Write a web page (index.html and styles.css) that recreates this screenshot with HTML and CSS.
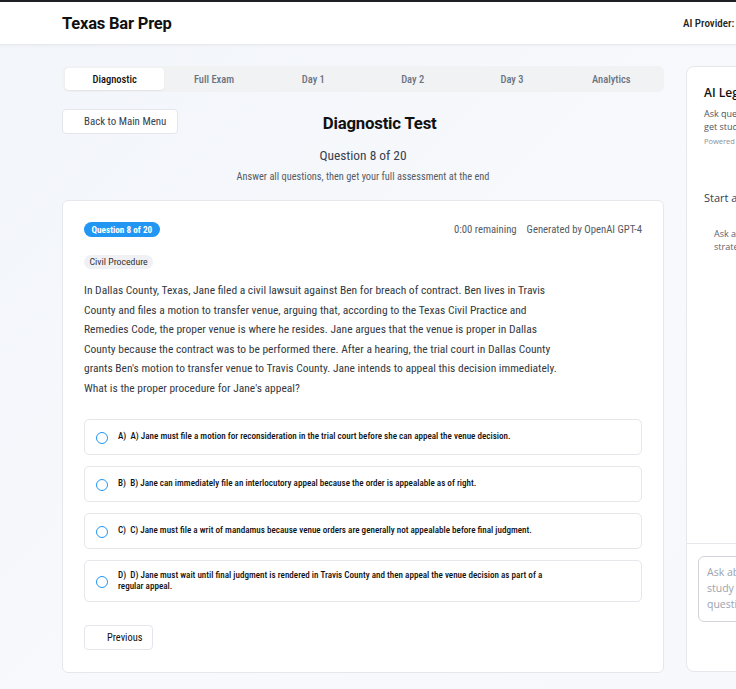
FILE: index.html
```html
<!DOCTYPE html>
<html lang="en">
<head>
<meta charset="utf-8">
<title>Texas Bar Prep</title>
<link rel="stylesheet" href="styles.css">
</head>
<body>
<header class="topbar">
  <div class="topbar-inner">
    <div class="brand">Texas Bar Prep</div>
    <div class="provider"><span class="provider-label">AI Provider:</span><span class="provider-select">OpenAI GPT-4</span></div>
  </div>
</header>

<div class="layout">
  <main class="main-col">
    <nav class="tabs">
      <button class="tab active">Diagnostic</button>
      <button class="tab">Full Exam</button>
      <button class="tab">Day 1</button>
      <button class="tab">Day 2</button>
      <button class="tab">Day 3</button>
      <button class="tab">Analytics</button>
    </nav>

    <div class="toolbar">
      <button class="btn back">Back to Main Menu</button>
      <h1 class="title">Diagnostic Test</h1>
    </div>
    <p class="progress">Question 8 of 20</p>
    <p class="hint">Answer all questions, then get your full assessment at the end</p>

    <section class="card">
      <div class="card-head">
        <span class="badge">Question 8 of 20</span>
        <div class="meta"><span>0:00 remaining</span><span>Generated by OpenAI GPT-4</span></div>
      </div>
      <span class="tag">Civil Procedure</span>
      <p class="stem">In Dallas County, Texas, Jane filed a civil lawsuit against Ben for breach of contract. Ben lives in Travis County and files a motion to transfer venue, arguing that, according to the Texas Civil Practice and Remedies Code, the proper venue is where he resides. Jane argues that the venue is proper in Dallas County because the contract was to be performed there. After a hearing, the trial court in Dallas County grants Ben's motion to transfer venue to Travis County. Jane intends to appeal this decision immediately. What is the proper procedure for Jane's appeal?</p>

      <div class="options">
        <label class="option"><span class="radio"></span><span class="option-text">A)&nbsp; A) Jane must file a motion for reconsideration in the trial court before she can appeal the venue decision.</span></label>
        <label class="option"><span class="radio"></span><span class="option-text">B)&nbsp; B) Jane can immediately file an interlocutory appeal because the order is appealable as of right.</span></label>
        <label class="option"><span class="radio"></span><span class="option-text">C)&nbsp; C) Jane must file a writ of mandamus because venue orders are generally not appealable before final judgment.</span></label>
        <label class="option"><span class="radio"></span><span class="option-text">D)&nbsp; D) Jane must wait until final judgment is rendered in Travis County and then appeal the venue decision as part of a regular appeal.</span></label>
      </div>

      <button class="btn prev">Previous</button>
    </section>
  </main>

  <aside class="chat">
    <div class="chat-head">
      <h2 class="chat-title">AI Legal Assistant</h2>
      <p class="chat-desc">Ask questions about Texas law and<br>get study help for the bar exam</p>
      <p class="chat-powered">Powered by OpenAI GPT-4</p>
    </div>
    <div class="chat-body">
      <p class="chat-empty">Start a conversation</p>
      <p class="chat-tip">Ask about legal concepts, exam<br>strategies, or specific questions</p>
    </div>
    <div class="chat-input">
      <textarea class="chat-box" placeholder="Ask about Texas law,&#10;study strategies, or&#10;questions..."></textarea>
    </div>
  </aside>
</div>
</body>
</html>
```
FILE: styles.css
```css
* { box-sizing: border-box; }

html, body {
  margin: 0;
  overflow: hidden;
}

body {
  width: 1010px;
  min-height: 689px;
  font-family: "Roboto Condensed", "Roboto", sans-serif;
  color: #1f2937;
  background: linear-gradient(135deg, #f2f5fa 0%, #f7f9fc 55%, #f6f8fc 100%);
}

/* ---------- top bar ---------- */
.topbar {
  height: 45px;
  background: #fff;
  border-top: 2px solid #1e1f22;
  border-bottom: 1px solid #e6e9ee;
  box-shadow: 0 1px 3px rgba(15, 23, 42, 0.04);
}

.topbar-inner {
  display: grid;
  grid-template-columns: 602px 300px;
  column-gap: 22px;
  align-items: center;
  height: 100%;
  padding: 0 62px;
}

.brand {
  font-family: "Roboto", sans-serif;
  font-weight: 700;
  font-size: 16.5px;
  letter-spacing: -0.2px;
  color: #111;
}

.provider {
  margin-left: -3px;
  white-space: nowrap;
  font-size: 11px;
  font-weight: 500;
  color: #222;
}

.provider-select {
  margin-left: 8px;
  padding: 3px 8px;
  border: 1px solid #d1d5db;
  border-radius: 4px;
}

/* ---------- layout ---------- */
.layout {
  display: grid;
  grid-template-columns: 602px 300px;
  column-gap: 22px;
  align-items: start;
  padding: 21px 62px 22px;
}

/* ---------- tabs ---------- */
.tabs {
  display: grid;
  grid-template-columns: repeat(6, 1fr);
  height: 26px;
  padding: 2px 3px;
  background: #f1f2f4;
  border-radius: 6px;
}

.tab {
  border: 0;
  background: transparent;
  border-radius: 4px;
  font-family: inherit;
  font-size: 10.5px;
  font-weight: 500;
  color: #6b7280;
  padding: 0;
}

.tab.active {
  background: #fff;
  color: #111;
  box-shadow: 0 1px 2px rgba(0, 0, 0, 0.06);
}

/* ---------- toolbar ---------- */
.toolbar {
  display: flex;
  align-items: center;
  height: 25px;
  margin-top: 17px;
}

.btn {
  height: 25px;
  background: #fff;
  border: 1px solid #e3e6ea;
  border-radius: 4px;
  font-family: inherit;
  font-size: 10.9px;
  color: #374151;
}

.back {
  padding: 0 11px 0 21px;
}

.title {
  flex: 1;
  margin: 3px 0 0;
  padding-right: 83px;
  text-align: center;
  font-family: "Roboto", sans-serif;
  font-size: 16.75px;
  letter-spacing: -0.2px;
  font-weight: 700;
  color: #111;
}

.progress {
  margin: 14px 0 0;
  text-align: center;
  font-size: 13.4px;
  line-height: 16px;
  color: #374151;
}

.hint {
  margin: 7px 0 0;
  text-align: center;
  font-size: 10.35px;
  line-height: 12px;
  color: #555b65;
}

/* ---------- question card ---------- */
.card {
  margin-top: 17px;
  padding: 21px 21px 22px;
  background: #fff;
  border: 1px solid #e5e7eb;
  border-radius: 6px;
}

.card-head {
  display: flex;
  justify-content: space-between;
  align-items: center;
  height: 15px;
}

.badge {
  height: 15px;
  line-height: 15px;
  padding: 0 7.5px;
  border-radius: 8px;
  background: #2196f3;
  color: #fff;
  font-size: 9.2px;
  font-weight: 700;
}

.meta {
  display: flex;
  gap: 10px;
  font-size: 10.7px;
  color: #555b65;
}

.tag {
  display: inline-block;
  margin-top: 18px;
  height: 14px;
  line-height: 14px;
  padding: 0 5.5px;
  border-radius: 7px;
  background: #f0f1f4;
  font-size: 9.8px;
  color: #333;
}

.stem {
  max-width: 486px;
  margin: 12px 0 0;
  font-size: 11.5px;
  line-height: 19.5px;
  color: #333943;
}

.options {
  display: flex;
  flex-direction: column;
  gap: 11px;
  margin-top: 21px;
}

.option {
  display: flex;
  align-items: center;
  gap: 10px;
  min-height: 36px;
  padding: 9.5px 11px;
  border: 1px solid #e5e7eb;
  border-radius: 5px;
  background: #fff;
}

.radio {
  flex: none;
  width: 12px;
  height: 12px;
  margin-top: 2px;
  border: 1.5px solid #2196f3;
  border-radius: 50%;
}

.option-text {
  max-width: 445px;
  margin-top: -1px;
  font-size: 9.1px;
  font-weight: 500;
  line-height: 11px;
  color: #111;
}

.prev {
  margin-top: 23px;
  padding: 0 10px 0 22px;
  font-size: 10.4px;
  color: #111;
}

/* ---------- chat panel ---------- */
.chat {
  display: flex;
  flex-direction: column;
  height: 606px;
  background: #fff;
  border: 1px solid #e5e7eb;
  border-radius: 8px;
  font-family: "Open Sans", sans-serif;
}

.chat-head {
  padding: 18px 17px 0;
}

.chat-title {
  margin: 0;
  font-size: 12px;
  line-height: 16px;
  font-weight: 600;
  color: #111;
}

.chat-desc {
  margin: 5.5px 0 0;
  font-size: 9px;
  line-height: 13px;
  color: #4b5563;
}

.chat-powered {
  margin: 3.5px 0 0;
  font-size: 7.5px;
  line-height: 10px;
  color: #8a8f98;
}

.chat-body {
  flex: 1;
  padding: 44px 17px 0;
}

.chat-empty {
  margin: 0;
  font-size: 11px;
  line-height: 15px;
  color: #374151;
}

.chat-tip {
  margin: 22px 0 0 10px;
  font-size: 9px;
  line-height: 13px;
  color: #5b6270;
}

.chat-input {
  padding: 12px 11px 49px;
  border-top: 1px solid #e5e7eb;
}

.chat-box {
  display: block;
  width: 220px;
  height: 66px;
  padding: 7px 8px;
  border: 1px solid #d1d5db;
  border-radius: 6px;
  resize: none;
  font-family: "Open Sans", sans-serif;
  font-size: 10.5px;
  line-height: 16px;
  color: #111;
}

.chat-box::placeholder {
  color: #9ca3af;
}
```
